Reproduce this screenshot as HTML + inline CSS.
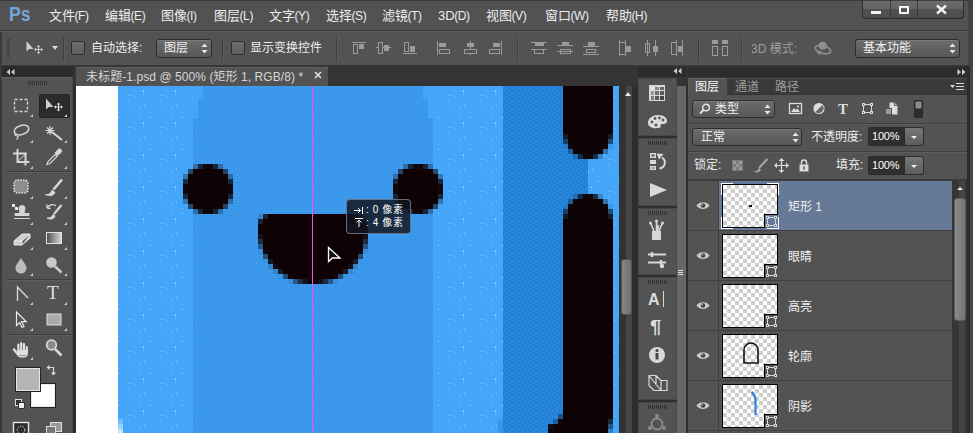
<!DOCTYPE html>
<html lang="zh-CN">
<head>
<meta charset="utf-8">
<title>未标题-1.psd @ 500% (矩形 1, RGB/8) *</title>
<style>
*{box-sizing:border-box;margin:0;padding:0}
html,body{width:973px;height:433px;overflow:hidden;background:#2e2e2e}
body:before{content:"";position:absolute;left:0;top:0;width:973px;height:1px;background:#3c3c3c;z-index:9}
body{position:relative;font-family:"Liberation Sans","Noto Sans CJK SC",sans-serif;font-size:12px;color:#e6e6e6}
.abs{position:absolute}
.t{position:absolute;white-space:nowrap;line-height:16px;font-size:12px}
svg{position:absolute;overflow:visible}
#menubar{left:0;top:0;width:973px;height:31px;background:#525252;border-bottom:1px solid #3b3b3b}
#menubar .mi{position:absolute;top:7px;font-size:13px;line-height:17px;color:#ececec;white-space:nowrap}
#ps{left:9px;top:3px;font-size:20px;line-height:22px;font-weight:bold;color:#77a5d8;transform:scaleX(.88);transform-origin:left top}
#menubar .l{font-size:12px;letter-spacing:-0.4px;margin-left:-0.5px}
#winctl{left:862px;top:0;width:102px;height:19px;background:linear-gradient(#6c6c6c 0,#646464 50%,#525252 50%,#4c4c4c 100%);border:1px solid #2e2e2e;border-top:none;border-radius:0 0 4px 4px}
#optbar{left:0;top:31px;width:973px;height:35px;background:#535353;border-top:1px solid #606060;border-bottom:1px solid #383838}
.vsep{position:absolute;top:37px;width:1px;height:24px;background:#3e3e3e;box-shadow:1px 0 0 #5e5e5e}
.chk{position:absolute;top:41px;width:14px;height:14px;border:1px solid #2f2f2f;border-radius:2px;background:linear-gradient(#6e6e6e,#5e5e5e)}
.dd{position:absolute;border:1px solid #2d2d2d;border-radius:3px;background:linear-gradient(#6b6b6b,#585858);box-shadow:inset 0 1px 0 #7a7a7a}
#tabbar{left:0;top:66px;width:973px;height:20px;background:#343434}
#doctab{left:76px;top:67px;width:252px;height:19px;background:#535353;border-top:1px solid #626262}
#toolhdr{left:2px;top:66px;width:71px;height:11px;background:#2b2b2b}
#toolbox{left:0;top:77px;width:73px;height:356px;background:#535353;border-left:2px solid #3a3a3a;border-right:1px solid #484848;border-top:1px solid #5e5e5e}
.tsep{position:absolute;left:5px;width:64px;height:1px;background:#3e3e3e;box-shadow:0 1px 0 #5e5e5e}
#canvas{left:77px;top:86px;width:542px;height:347px;background:#42a4f8;overflow:hidden}
#vscroll{left:619px;top:86px;width:19px;height:347px;background:linear-gradient(90deg,#333 0,#333 7px,#454545 7px,#454545 13px,#2e2e2e 13px)}
#vthumb{left:621px;top:259px;width:11px;height:56px;background:linear-gradient(90deg,#868686,#707070);border-radius:3px;border:1px solid #555}
#strip{left:638px;top:78px;width:39px;height:355px;background:#2e2e2e}
.sg{position:absolute;left:0;width:39px;background:#535353;border:1px solid #474747}
.grip{position:absolute;height:4px;background:repeating-linear-gradient(90deg,#333 0,#333 1px,transparent 1px,transparent 2px)}
#handle{left:677px;top:86px;width:9px;height:347px;background:#676767}
#panel{left:688px;top:78px;width:279px;height:355px;background:#535353}
#ptabs{left:0;top:0;width:279px;height:17px;background:#3a3a3a;border-bottom:1px solid #333;border-top:1px solid #484848}
#ptab1{left:0;top:0;width:39px;height:18px;background:#535353;border-top:1px solid #646464;border-left:1px solid #5e5e5e}
.psep{position:absolute;left:0;width:279px;height:1px;background:#3f3f3f;box-shadow:0 1px 0 #5c5c5c}
.val{position:absolute;width:37px;height:19px;background:#2f2f2f;border:1px solid #2a2a2a;border-radius:2px 0 0 2px;color:#fff;font-size:11px;line-height:17px;padding-left:3px;letter-spacing:-0.2px}
.vbtn{position:absolute;width:19px;height:19px;background:linear-gradient(#777,#5d5d5d);border:1px solid #2d2d2d;border-left:none;border-radius:0 3px 3px 0}
.vbtn:after{content:"";position:absolute;left:6px;top:8px;border:3px solid transparent;border-top:3px solid #eee;border-bottom:none}
.row{position:absolute;left:0;width:264px;height:50px;border-bottom:1px solid #404040}
.row .eyecol{position:absolute;left:0;top:0;width:31px;height:49px;border-right:1px solid #404040}
.thumb{position:absolute;left:34px;top:3px;width:56px;height:44px;border:1px solid #000;
 background:repeating-conic-gradient(#cdcdcd 0 25%,#fff 0 50%) 0 0/8px 8px}
.row.sel .badge{background:#667996}
.badge{position:absolute;right:-1px;bottom:-1px;width:14px;height:14px;background:#535353;border:1px solid #000;border-right:none;border-bottom:none}
.lname{position:absolute;left:100px;top:18px;font-size:12px;line-height:16px;color:#f0f0f0;white-space:nowrap}
</style>
</head>
<body>
<div id="menubar" class="abs">
  <div id="ps" class="abs">Ps</div>
  <span class="mi" style="left:49px">文件<span class="l">(F)</span></span>
  <span class="mi" style="left:105px">编辑<span class="l">(E)</span></span>
  <span class="mi" style="left:161px">图像<span class="l">(I)</span></span>
  <span class="mi" style="left:214px">图层<span class="l">(L)</span></span>
  <span class="mi" style="left:269px">文字<span class="l">(Y)</span></span>
  <span class="mi" style="left:326px">选择<span class="l">(S)</span></span>
  <span class="mi" style="left:382px">滤镜<span class="l">(T)</span></span>
  <span class="mi" style="left:438px">3D<span class="l">(D)</span></span>
  <span class="mi" style="left:486px">视图<span class="l">(V)</span></span>
  <span class="mi" style="left:545px">窗口<span class="l">(W)</span></span>
  <span class="mi" style="left:606px">帮助<span class="l">(H)</span></span>
</div>
<div id="winctl" class="abs">
  <div class="abs" style="left:27px;top:0;width:1px;height:18px;background:#3a3a3a"></div>
  <div class="abs" style="left:54px;top:0;width:1px;height:18px;background:#3a3a3a"></div>
  <div class="abs" style="left:8px;top:11px;width:10px;height:3px;background:#f2f2f2"></div>
  <div class="abs" style="left:36px;top:6px;width:10px;height:8px;border:2px solid #f2f2f2"></div>
  <svg style="left:73px;top:5px" width="11" height="9" viewBox="0 0 11 9"><path d="M1 0.5 L10 8.5 M10 0.5 L1 8.5" stroke="#f2f2f2" stroke-width="2.4" fill="none"/></svg>
</div>
<div id="optbar" class="abs"></div>
<!-- options bar contents (absolute page coords) -->
<div class="abs" style="left:7px;top:39px;width:3px;height:20px;background:repeating-linear-gradient(#3a3a3a 0,#3a3a3a 1px,transparent 1px,transparent 2px)"></div>
<svg style="left:25px;top:40px" width="20" height="15" viewBox="0 0 20 15"><path d="M1.500 1 L1.500 11.500 L4.200 9 L8.500 9 Z" fill="#cfcfcf"/><path d="M13.500 6.500 v6 M10.500 9.500 h6" stroke="#cfcfcf" stroke-width="1" fill="none"/><path d="M13.500 5 l-1.800 2 h3.600z M13.500 14 l-1.800 -2 h3.600z M9 9.500 l2 -1.800 v3.600z M18 9.500 l-2 -1.800 v3.600z" fill="#cfcfcf"/></svg>
<div class="abs" style="left:52px;top:46px;border:3px solid transparent;border-top:4px solid #ddd;border-bottom:none"></div>
<div class="vsep" style="left:63px"></div>
<div class="chk" style="left:71px"></div>
<span class="t" style="left:91px;top:40px;font-size:12px;color:#eee">自动选择:</span>
<div class="dd" style="left:156px;top:39px;width:56px;height:19px"></div>
<span class="t" style="left:164px;top:40px;font-size:12px;color:#f0f0f0">图层</span>
<svg style="left:201px;top:43px" width="7" height="11" viewBox="0 0 7 11"><path d="M3.5 0.5 L6.5 4 H0.5Z M3.5 10.5 L6.5 7 H0.5Z" fill="#e8e8e8"/></svg>
<div class="vsep" style="left:222px"></div>
<div class="chk" style="left:231px"></div>
<span class="t" style="left:250px;top:40px;font-size:12px;color:#eee">显示变换控件</span>
<div class="vsep" style="left:336px"></div>
<svg style="left:0;top:31px" width="973" height="35" viewBox="0 31 973 35" fill="none" stroke="#9a9a9a" stroke-width="1" shape-rendering="crispEdges">
 <!-- align top/vcenter/bottom -->
 <path d="M352 42.5 h14" /><rect x="353.500" y="44.500" width="4" height="9"/><rect x="359" y="44" width="5" height="5" fill="#9a9a9a" stroke="none"/>
 <path d="M376 47.500 h15"/><rect x="378.500" y="42.500" width="4" height="11" fill="#535353"/><rect x="384" y="45" width="5" height="6" fill="#9a9a9a" stroke="none"/>
 <path d="M403 53.500 h14"/><rect x="404.500" y="42.500" width="4" height="9"/><rect x="410" y="46" width="5" height="6" fill="#9a9a9a" stroke="none"/>
 <!-- align left/hcenter/right -->
 <path d="M437.500 41 v14"/><rect x="439" y="43" width="7" height="4" fill="#9a9a9a" stroke="none"/><rect x="439.500" y="49.500" width="10" height="4"/>
 <path d="M470.500 41 v14"/><rect x="467" y="43" width="7" height="4" fill="#9a9a9a" stroke="none"/><rect x="464.500" y="49.500" width="12" height="4" fill="#535353"/>
 <path d="M501.500 41 v14"/><rect x="493" y="43" width="7" height="4" fill="#9a9a9a" stroke="none"/><rect x="489.500" y="49.500" width="10" height="4"/>
 <!-- distribute vertical -->
 <path d="M531 42.500 h16 M531 49.500 h16"/><rect x="535" y="43" width="9" height="3" fill="#9a9a9a" stroke="none"/><rect x="534.500" y="49.500" width="9" height="4"/>
 <path d="M557 45.500 h16 M557 51.500 h16"/><rect x="562" y="42" width="7" height="4" fill="#9a9a9a" stroke="none"/><rect x="560.500" y="49.500" width="10" height="4" fill="#535353"/><path d="M561 51.500 h9"/>
 <path d="M583 46.500 h16 M583 54.500 h16"/><rect x="588" y="42" width="7" height="4" fill="#9a9a9a" stroke="none"/><rect x="586.500" y="49.500" width="9" height="3"/>
 <!-- distribute horizontal -->
 <path d="M619.500 40 v16 M625.500 40 v16"/><path d="M619.500 42.500 h6 M619.500 54.500 h6"/><rect x="626" y="46" width="5" height="6" fill="#9a9a9a" stroke="none"/>
 <path d="M647.500 40 v16 M655.500 40 v16"/><rect x="645.500" y="43.500" width="4" height="9" fill="#535353"/><path d="M647.500 44 v8"/><rect x="653" y="46" width="5" height="6" fill="#9a9a9a" stroke="none"/>
 <path d="M676.500 40 v16 M682.500 40 v16"/><rect x="671.500" y="42.500" width="5" height="12"/><rect x="678" y="46" width="4" height="6" fill="#9a9a9a" stroke="none"/>
 <!-- last -->
 <rect x="712" y="40" width="6" height="4" fill="#9a9a9a" stroke="none"/><rect x="712.500" y="46.500" width="5" height="9"/>
 <rect x="722" y="40" width="6" height="4" fill="#9a9a9a" stroke="none"/><rect x="722.500" y="46.500" width="5" height="9"/>
</svg>
<div class="vsep" style="left:517px"></div>
<div class="vsep" style="left:698px"></div>
<div class="vsep" style="left:741px"></div>
<span class="t" style="left:751px;top:41px;font-size:12px;color:#9c9c9c">3D 模式:</span>
<svg style="left:813px;top:40px" width="20" height="16" viewBox="0 0 20 16" fill="none" stroke="#8e8e8e" stroke-width="1.600"><ellipse cx="10" cy="9.500" rx="8" ry="3.800" transform="rotate(14 10 9.500)"/><circle cx="9.700" cy="5.800" r="4" fill="#8e8e8e" stroke="none"/><path d="M3.500 11.500 l5.500 -0.500 l-2.500 4.500z" fill="#8e8e8e" stroke="none"/></svg>
<div class="dd" style="left:855px;top:39px;width:105px;height:19px"></div>
<span class="t" style="left:863px;top:40px;font-size:12px;color:#f4f4f4">基本功能</span>
<svg style="left:949px;top:43px" width="7" height="11" viewBox="0 0 7 11"><path d="M3.5 0.5 L6.5 4 H0.5Z M3.5 10.5 L6.5 7 H0.5Z" fill="#e8e8e8"/></svg>
<div class="abs" style="left:968px;top:0;width:5px;height:66px;background:#424242"></div>
<div id="tabbar" class="abs"></div>
<div id="doctab" class="abs"></div>
<span class="t" style="left:86px;top:69px;font-size:12px;color:#d6d6d6;letter-spacing:0.07px">未标题-1.psd @ 500% (矩形 1, RGB/8) *</span>
<svg style="left:314px;top:71px" width="8" height="8" viewBox="0 0 8 8"><path d="M1 1 L7 7 M7 1 L1 7" stroke="#e0e0e0" stroke-width="1.6" fill="none"/></svg>
<div id="toolhdr" class="abs"></div>
<div class="abs" style="left:0;top:32px;width:2px;height:401px;background:#3b3b3b"></div>
<div class="abs" style="left:76px;top:86px;width:1px;height:347px;background:#fff"></div>
<svg style="left:6px;top:69px" width="9" height="6" viewBox="0 0 9 6"><path d="M4 0 V6 L0.5 3Z M8.500 0 V6 L5 3Z" fill="#d0d0d0"/></svg>

<div id="toolbox" class="abs">
 <div class="grip" style="left:26px;top:3px;width:20px"></div>
 <div class="abs" style="left:37px;top:16px;width:31px;height:24px;background:#2b2b2b;border-radius:2px;border:1px solid #232323"></div>
 <div class="tsep" style="top:93px"></div>
 <div class="tsep" style="top:201px"></div>
 <div class="tsep" style="top:256px"></div>
 <svg style="left:-2px;top:-78px" width="77" height="433" viewBox="0 0 77 433" fill="none" stroke="#d6d6d6" stroke-width="1.3">
  <!-- marquee -->
  <rect x="14.500" y="99.500" width="13" height="12" stroke-dasharray="3 2" stroke-width="1.4"/>
  <!-- move tool -->
  <path d="M46 98.500 L46 109.500 L48.800 107 L53.500 107 Z" fill="#cfcfcf" stroke="none"/>
  <path d="M58.500 104 v6 M55.500 107 h6" stroke-width="1" stroke="#e0e0e0"/><path d="M58.500 102.500 l-1.800 2 h3.600z M58.500 111.500 l-1.800 -2 h3.600z M54 107 l2 -1.800 v3.600z M63 107 l-2 -1.800 v3.600z" fill="#e0e0e0" stroke="none"/>
  <!-- lasso -->
  <ellipse cx="21.500" cy="130" rx="7.500" ry="4.500" transform="rotate(-18 21.500 130)" stroke-width="1.5"/><path d="M16 133 c-2 1 -1 3 1 3 c2 0 1 2 -0.500 3.500" stroke-width="1.200"/>
  <!-- wand -->
  <path d="M52 132 L62 140" stroke-width="2.200"/><path d="M50 126 v9 M45.500 130.500 h9 M47 127.500 l6 6 M53 127.500 l-6 6" stroke-width="1.200"/>
  <!-- crop -->
  <path d="M17.500 149 v13 h12 M13 153.500 h12.500 v12" stroke-width="2"/><path d="M17 162 l10 -9" stroke-width="1"/>
  <!-- eyedropper -->
  <path d="M47 164.500 l1 -3 l7 -7 l2 2 l-7 7 z" stroke-width="1.200"/><path d="M55 153 l3 -3.500 a2 2 0 0 1 3 3 l-3.500 3 z" fill="#d6d6d6" stroke-width="1"/>
  <!-- healing -->
  <rect x="14" y="180" width="14" height="13" rx="3.500" fill="#8e8e8e" stroke="#e4e4e4" stroke-width="1.600" stroke-dasharray="1.500 1.300"/>
  <!-- brush -->
  <path d="M62 179.500 L53.500 189.500" stroke-width="2.600"/><path d="M45.500 194.500 c3.500 0.500 5.500 -1.500 6.500 -4.500 l3 2.500 c-1.500 3.500 -5 4 -9.500 2z" fill="#d6d6d6" stroke-width="1"/>
  <!-- stamp -->
  <path d="M14 218.500 h16 M15 215.500 h14 v-2 h-4.500 c-1 -2 0.500 -3 0.500 -5 a3 3 0 0 0 -6 0 c0 2 1.500 3 0.500 5 h-4.500z" fill="#d6d6d6" stroke-width="1"/><path d="M12 204 h3 v3 h-3z M15 207 h3 v3 h-3z" fill="#e8e8e8" stroke="none"/>
  <!-- history brush -->
  <path d="M61.500 205 L54 214" stroke-width="2.200"/><path d="M47 218 c3 0.500 5 -1 6 -3.500 l2 1.500 c-1 3 -4 4 -8 2z" fill="#d6d6d6" stroke-width="1"/><path d="M47 208 c2 -4 7 -4 9 -2 M47 208 l0 -3.500 M47 208 l3.500 0.500" stroke-width="1.300"/>
  <!-- eraser -->
  <path d="M14 241 l8 -7 h8 l-8 7 z M14 241 v4 h8 v-4 M22 245 l8 -7 v-4" fill="#cfcfcf" stroke="#e6e6e6" stroke-width="1"/>
  <!-- gradient -->
  <defs><linearGradient id="gr" x1="0" x2="1"><stop offset="0" stop-color="#4a4a4a"/><stop offset="1" stop-color="#dcdcdc"/></linearGradient></defs>
  <rect x="46.500" y="232.500" width="15" height="11" fill="url(#gr)" stroke="#e2e2e2" stroke-width="1"/>
  <!-- blur drop -->
  <path d="M21 258 c3 5 5.500 7 5.500 10 a5.500 5.500 0 0 1 -11 0 c0 -3 2.500 -5 5.500 -10z" fill="#bdbdbd" stroke="none"/>
  <!-- dodge -->
  <circle cx="51.500" cy="262.500" r="5.300" fill="#c9c9c9" stroke="none"/><path d="M55 266.500 L61.500 272.500" stroke-width="2.600" stroke="#c9c9c9"/>
  <!-- pen/convert -->
  <path d="M17.500 301 V287 L28 298" stroke-width="1.400"/>
  <!-- T -->
  <!-- path select -->
  <path d="M16.500 312 v13.500 l3.200 -3 l2.300 5 l2 -1 l-2.300 -4.800 h4.500 z" stroke-width="1.200" stroke="#ececec"/>
  <!-- rectangle -->
  <rect x="47" y="314" width="14" height="11" fill="#a9a9a9" stroke="#dedede" stroke-width="1"/>
  <!-- hand -->
  <g stroke="#dedede" stroke-linecap="round" fill="none"><path d="M18.400 351 V344.500 M21.200 351 V343 M24 351 V344 M26.800 352 V347" stroke-width="2.200"/><path d="M14 349.500 L18 354.500" stroke-width="2.500"/></g>
  <path d="M17.300 350 H27.900 V353 C27.900 356 26 357.500 24 357.500 H20.500 C18.500 357.500 17.300 355.500 17.300 353.500Z" fill="#dedede" stroke="none"/>
  <path d="M19 355.500 h7" stroke="#9a9a9a" stroke-width="1"/>
  <!-- zoom -->
  <circle cx="51.500" cy="345" r="4.800" stroke-width="1.800" fill="#8a8a8a"/><path d="M55 349 L61.500 355.500" stroke-width="2.600"/>
  <!-- swap -->
  <path d="M49 367.500 h4.500 v6" stroke-width="1.200"/><path d="M49.500 365 v5 l-3 -2.500z M51 372.500 h5 l-2.500 3z" fill="#e0e0e0" stroke="none"/>
  <!-- default colors -->
  <rect x="15.500" y="399.500" width="6" height="6" fill="#333" stroke="#ddd" stroke-width="1"/><rect x="18.500" y="402.500" width="6" height="6" fill="#eee" stroke="#333" stroke-width="1"/>
  <!-- quick mask -->
  <rect x="13.500" y="422.500" width="15" height="12" stroke="#e6e6e6" stroke-width="1.400" fill="#2d2d2d"/><circle cx="21" cy="430" r="3.800" stroke-dasharray="1.500 1.200" stroke-width="1"/>
  <!-- screen mode -->
  <rect x="50.500" y="422.500" width="11" height="9" fill="#9a9a9a" stroke="#dedede" stroke-width="1"/><rect x="46.500" y="426.500" width="9" height="8" fill="#777" stroke="#dedede" stroke-width="1"/>
  <!-- flyout triangles -->
  <g fill="#c8c8c8" stroke="none">
   <path d="M33 114 v3 h-3z M67 114 v3 h-3z M33 140 v3 h-3z M67 140 v3 h-3z M33 166 v3 h-3z M67 166 v3 h-3z"/>
   <path d="M33 196 v3 h-3z M67 196 v3 h-3z M33 222 v3 h-3z M67 222 v3 h-3z M33 247 v3 h-3z M67 247 v3 h-3z M33 273 v3 h-3z M67 273 v3 h-3z"/>
   <path d="M33 302 v3 h-3z M67 302 v3 h-3z M33 328 v3 h-3z M67 328 v3 h-3z M33 357 v3 h-3z"/>
  </g>
 </svg>
 <span class="t" style="left:45px;top:204px;font-family:'Liberation Serif',serif;font-size:19px;line-height:22px;color:#e2e2e2">T</span>
 <div class="abs" style="left:28px;top:305px;width:26px;height:25px;background:#fff;border:1px solid #222;box-shadow:0 0 0 1px #e8e8e8 inset"></div>
 <div class="abs" style="left:13px;top:289px;width:26px;height:25px;background:#b5b5b5;border:1px solid #222;box-shadow:0 0 0 1px #e8e8e8 inset"></div>
</div>

<div id="canvas" class="abs">
<svg class="abs" style="left:0;top:0" width="542" height="347" viewBox="0 0 542 347" shape-rendering="crispEdges">
<defs><pattern id="pm" width="4" height="6" patternUnits="userSpaceOnUse"><rect x="0" y="0" width="1" height="1" fill="#2c78d2" opacity=".55"/><rect x="2" y="3" width="1" height="1" fill="#2c78d2" opacity=".55"/></pattern><pattern id="pd" width="12" height="8" patternUnits="userSpaceOnUse"><rect x="0" y="7" width="1" height="1" fill="#12629f" opacity=".8"/><rect x="3" y="5" width="1" height="1" fill="#12629f" opacity=".8"/><rect x="6" y="3" width="1" height="1" fill="#12629f" opacity=".8"/><rect x="9" y="1" width="1" height="1" fill="#12629f" opacity=".8"/><rect x="1" y="3" width="1" height="1" fill="#12629f" opacity=".8"/><rect x="4" y="1" width="1" height="1" fill="#12629f" opacity=".8"/><rect x="7" y="7" width="1" height="1" fill="#12629f" opacity=".8"/><rect x="10" y="5" width="1" height="1" fill="#12629f" opacity=".8"/></pattern><pattern id="pl" width="32" height="32" patternUnits="userSpaceOnUse"><rect x="20" y="9" width="1" height="1" fill="#d8f0ff" opacity=".6"/><rect x="3" y="4" width="1" height="1" fill="#8aa2b4" opacity=".6"/><rect x="23" y="3" width="1" height="1" fill="#8aa2b4" opacity=".6"/><rect x="2" y="5" width="1" height="1" fill="#d8f0ff" opacity=".6"/><rect x="26" y="4" width="1" height="1" fill="#8aa2b4" opacity=".6"/><rect x="5" y="27" width="1" height="1" fill="#8aa2b4" opacity=".6"/><rect x="7" y="14" width="1" height="1" fill="#8aa2b4" opacity=".6"/><rect x="25" y="3" width="1" height="1" fill="#8aa2b4" opacity=".6"/><rect x="2" y="8" width="1" height="1" fill="#a8dcff" opacity=".6"/><rect x="26" y="9" width="1" height="1" fill="#8aa2b4" opacity=".6"/><rect x="19" y="11" width="1" height="1" fill="#8aa2b4" opacity=".6"/><rect x="12" y="23" width="1" height="1" fill="#8aa2b4" opacity=".6"/><rect x="4" y="3" width="1" height="1" fill="#8aa2b4" opacity=".6"/><rect x="31" y="27" width="1" height="1" fill="#a8dcff" opacity=".6"/><rect x="29" y="29" width="1" height="1" fill="#a8dcff" opacity=".6"/><rect x="19" y="15" width="1" height="1" fill="#8aa2b4" opacity=".6"/><rect x="15" y="5" width="1" height="1" fill="#a8dcff" opacity=".6"/><rect x="31" y="21" width="1" height="1" fill="#d8f0ff" opacity=".6"/><rect x="18" y="4" width="1" height="1" fill="#8aa2b4" opacity=".6"/><rect x="26" y="10" width="1" height="1" fill="#a8dcff" opacity=".6"/><rect x="9" y="31" width="1" height="1" fill="#d8f0ff" opacity=".6"/><rect x="2" y="4" width="1" height="1" fill="#a8dcff" opacity=".6"/><rect x="21" y="22" width="1" height="1" fill="#d8f0ff" opacity=".6"/><rect x="29" y="4" width="1" height="1" fill="#8aa2b4" opacity=".6"/><rect x="17" y="30" width="1" height="1" fill="#8aa2b4" opacity=".6"/><rect x="3" y="19" width="1" height="1" fill="#d8f0ff" opacity=".6"/></pattern></defs>
<rect x="0" y="0" width="41" height="347" fill="#ffffff"/>
<rect x="41" y="0" width="501" height="347" fill="#43a6fa"/>
<rect x="116" y="33" width="240" height="314" fill="#3c9aec"/>
<rect x="121" y="13" width="230" height="20" fill="#3c9aec"/>
<rect x="126" y="0" width="220" height="13" fill="#3c9aec"/>
<rect x="426" y="0" width="85" height="347" fill="#2686dd"/>
<rect x="421" y="333" width="5" height="14" fill="#3698ed"/>
<rect x="41" y="333" width="5" height="5" fill="#72bcfb"/>
<rect x="41" y="338" width="5" height="5" fill="#98cefc"/>
<rect x="41" y="343" width="5" height="4" fill="#c7e4fe"/>
<rect x="41" y="0" width="75" height="347" fill="url(#pl)"/>
<rect x="356" y="0" width="70" height="347" fill="url(#pl)"/>
<rect x="511" y="0" width="31" height="347" fill="url(#pl)"/>
<rect x="116" y="33" width="240" height="314" fill="url(#pm)"/>
<rect x="121" y="13" width="230" height="20" fill="url(#pm)"/>
<rect x="126" y="5" width="220" height="8" fill="url(#pm)"/>
<rect x="426" y="0" width="85" height="347" fill="url(#pd)"/>
<rect x="116" y="78" width="5" height="5" fill="#2e6da7"/>
<rect x="121" y="78" width="5" height="5" fill="#19263a"/>
<rect x="126" y="78" width="10" height="5" fill="#0f070b"/>
<rect x="136" y="78" width="5" height="5" fill="#19263a"/>
<rect x="141" y="78" width="5" height="5" fill="#2e6da7"/>
<rect x="111" y="83" width="5" height="5" fill="#254a70"/>
<rect x="116" y="83" width="30" height="5" fill="#0e0204"/>
<rect x="146" y="83" width="5" height="5" fill="#22446a"/>
<rect x="106" y="88" width="5" height="5" fill="#3375b1"/>
<rect x="111" y="88" width="40" height="5" fill="#0e0204"/>
<rect x="151" y="88" width="5" height="5" fill="#2e6da7"/>
<rect x="106" y="93" width="5" height="5" fill="#1a283e"/>
<rect x="111" y="93" width="40" height="5" fill="#0e0204"/>
<rect x="151" y="93" width="5" height="5" fill="#19263a"/>
<rect x="106" y="98" width="5" height="5" fill="#10070c"/>
<rect x="111" y="98" width="40" height="5" fill="#0e0204"/>
<rect x="151" y="98" width="5" height="5" fill="#0f070b"/>
<rect x="106" y="103" width="5" height="5" fill="#10070c"/>
<rect x="111" y="103" width="40" height="5" fill="#0e0204"/>
<rect x="151" y="103" width="5" height="5" fill="#0f070b"/>
<rect x="106" y="108" width="5" height="5" fill="#1a283e"/>
<rect x="111" y="108" width="40" height="5" fill="#0e0204"/>
<rect x="151" y="108" width="5" height="5" fill="#19263a"/>
<rect x="106" y="113" width="5" height="5" fill="#3375b1"/>
<rect x="111" y="113" width="40" height="5" fill="#0e0204"/>
<rect x="151" y="113" width="5" height="5" fill="#2e6da7"/>
<rect x="111" y="118" width="5" height="5" fill="#254a70"/>
<rect x="116" y="118" width="30" height="5" fill="#0e0204"/>
<rect x="146" y="118" width="5" height="5" fill="#22446a"/>
<rect x="116" y="123" width="5" height="5" fill="#2e6da7"/>
<rect x="121" y="123" width="5" height="5" fill="#19263a"/>
<rect x="126" y="123" width="10" height="5" fill="#0f070b"/>
<rect x="136" y="123" width="5" height="5" fill="#19263a"/>
<rect x="141" y="123" width="5" height="5" fill="#2e6da7"/>
<rect x="326" y="78" width="5" height="5" fill="#2e6da7"/>
<rect x="331" y="78" width="5" height="5" fill="#19263a"/>
<rect x="336" y="78" width="10" height="5" fill="#0f070b"/>
<rect x="346" y="78" width="5" height="5" fill="#19263a"/>
<rect x="351" y="78" width="5" height="5" fill="#2e6da7"/>
<rect x="321" y="83" width="5" height="5" fill="#22446a"/>
<rect x="326" y="83" width="30" height="5" fill="#0e0204"/>
<rect x="356" y="83" width="5" height="5" fill="#254a70"/>
<rect x="316" y="88" width="5" height="5" fill="#2e6da7"/>
<rect x="321" y="88" width="40" height="5" fill="#0e0204"/>
<rect x="361" y="88" width="5" height="5" fill="#3375b1"/>
<rect x="316" y="93" width="5" height="5" fill="#19263a"/>
<rect x="321" y="93" width="40" height="5" fill="#0e0204"/>
<rect x="361" y="93" width="5" height="5" fill="#1a283e"/>
<rect x="316" y="98" width="5" height="5" fill="#0f070b"/>
<rect x="321" y="98" width="40" height="5" fill="#0e0204"/>
<rect x="361" y="98" width="5" height="5" fill="#10070c"/>
<rect x="316" y="103" width="5" height="5" fill="#0f070b"/>
<rect x="321" y="103" width="40" height="5" fill="#0e0204"/>
<rect x="361" y="103" width="5" height="5" fill="#10070c"/>
<rect x="316" y="108" width="5" height="5" fill="#19263a"/>
<rect x="321" y="108" width="40" height="5" fill="#0e0204"/>
<rect x="361" y="108" width="5" height="5" fill="#1a283e"/>
<rect x="316" y="113" width="5" height="5" fill="#2e6da7"/>
<rect x="321" y="113" width="40" height="5" fill="#0e0204"/>
<rect x="361" y="113" width="5" height="5" fill="#3375b1"/>
<rect x="321" y="118" width="5" height="5" fill="#22446a"/>
<rect x="326" y="118" width="30" height="5" fill="#0e0204"/>
<rect x="356" y="118" width="5" height="5" fill="#254a70"/>
<rect x="326" y="123" width="5" height="5" fill="#2e6da7"/>
<rect x="331" y="123" width="5" height="5" fill="#19263a"/>
<rect x="336" y="123" width="10" height="5" fill="#0f070b"/>
<rect x="346" y="123" width="5" height="5" fill="#19263a"/>
<rect x="351" y="123" width="5" height="5" fill="#2e6da7"/>
<rect x="181" y="128" width="5" height="5" fill="#3582c8"/>
<rect x="186" y="128" width="5" height="5" fill="#19263a"/>
<rect x="191" y="128" width="90" height="5" fill="#0e0204"/>
<rect x="281" y="128" width="5" height="5" fill="#19263a"/>
<rect x="286" y="128" width="5" height="5" fill="#3582c8"/>
<rect x="181" y="133" width="5" height="5" fill="#19263a"/>
<rect x="186" y="133" width="100" height="5" fill="#0e0204"/>
<rect x="286" y="133" width="5" height="5" fill="#19263a"/>
<rect x="181" y="138" width="110" height="5" fill="#0e0204"/>
<rect x="181" y="143" width="110" height="5" fill="#0e0204"/>
<rect x="181" y="148" width="5" height="5" fill="#13131d"/>
<rect x="186" y="148" width="100" height="5" fill="#0e0204"/>
<rect x="286" y="148" width="5" height="5" fill="#13131d"/>
<rect x="181" y="153" width="5" height="5" fill="#1c2f49"/>
<rect x="186" y="153" width="100" height="5" fill="#0e0204"/>
<rect x="286" y="153" width="5" height="5" fill="#1c2f49"/>
<rect x="181" y="158" width="5" height="5" fill="#285886"/>
<rect x="186" y="158" width="100" height="5" fill="#0e0204"/>
<rect x="286" y="158" width="5" height="5" fill="#285886"/>
<rect x="181" y="163" width="5" height="5" fill="#388eda"/>
<rect x="186" y="163" width="5" height="5" fill="#0f070b"/>
<rect x="191" y="163" width="90" height="5" fill="#0e0204"/>
<rect x="281" y="163" width="5" height="5" fill="#0f070b"/>
<rect x="286" y="163" width="5" height="5" fill="#388eda"/>
<rect x="186" y="168" width="5" height="5" fill="#244c74"/>
<rect x="191" y="168" width="90" height="5" fill="#0e0204"/>
<rect x="281" y="168" width="5" height="5" fill="#244c74"/>
<rect x="186" y="173" width="5" height="5" fill="#3b95e5"/>
<rect x="191" y="173" width="5" height="5" fill="#161c2c"/>
<rect x="196" y="173" width="80" height="5" fill="#0e0204"/>
<rect x="276" y="173" width="5" height="5" fill="#161c2c"/>
<rect x="281" y="173" width="5" height="5" fill="#3b95e5"/>
<rect x="191" y="178" width="5" height="5" fill="#3685cb"/>
<rect x="196" y="178" width="5" height="5" fill="#12101a"/>
<rect x="201" y="178" width="70" height="5" fill="#0e0204"/>
<rect x="271" y="178" width="5" height="5" fill="#12101a"/>
<rect x="276" y="178" width="5" height="5" fill="#3685cb"/>
<rect x="196" y="183" width="5" height="5" fill="#3685cb"/>
<rect x="201" y="183" width="5" height="5" fill="#161c2c"/>
<rect x="206" y="183" width="60" height="5" fill="#0e0204"/>
<rect x="266" y="183" width="5" height="5" fill="#161c2c"/>
<rect x="271" y="183" width="5" height="5" fill="#3685cb"/>
<rect x="201" y="188" width="5" height="5" fill="#3b95e5"/>
<rect x="206" y="188" width="5" height="5" fill="#244c74"/>
<rect x="211" y="188" width="5" height="5" fill="#0f070b"/>
<rect x="216" y="188" width="40" height="5" fill="#0e0204"/>
<rect x="256" y="188" width="5" height="5" fill="#0f070b"/>
<rect x="261" y="188" width="5" height="5" fill="#244c74"/>
<rect x="266" y="188" width="5" height="5" fill="#3b95e5"/>
<rect x="211" y="193" width="5" height="5" fill="#388eda"/>
<rect x="216" y="193" width="5" height="5" fill="#285886"/>
<rect x="221" y="193" width="5" height="5" fill="#1c2f49"/>
<rect x="226" y="193" width="5" height="5" fill="#13131d"/>
<rect x="231" y="193" width="10" height="5" fill="#0e0204"/>
<rect x="241" y="193" width="5" height="5" fill="#13131d"/>
<rect x="246" y="193" width="5" height="5" fill="#1c2f49"/>
<rect x="251" y="193" width="5" height="5" fill="#285886"/>
<rect x="256" y="193" width="5" height="5" fill="#388eda"/>
<rect x="486" y="-2" width="50" height="5" fill="#0e0204"/>
<rect x="486" y="3" width="50" height="5" fill="#0e0204"/>
<rect x="486" y="8" width="50" height="5" fill="#0e0204"/>
<rect x="486" y="13" width="50" height="5" fill="#0e0204"/>
<rect x="486" y="18" width="50" height="5" fill="#0e0204"/>
<rect x="486" y="23" width="50" height="5" fill="#0e0204"/>
<rect x="486" y="28" width="50" height="5" fill="#0e0204"/>
<rect x="486" y="33" width="50" height="5" fill="#0e0204"/>
<rect x="486" y="38" width="50" height="5" fill="#0e0204"/>
<rect x="486" y="43" width="50" height="5" fill="#0e0204"/>
<rect x="486" y="48" width="5" height="5" fill="#121929"/>
<rect x="491" y="48" width="40" height="5" fill="#0e0204"/>
<rect x="531" y="48" width="5" height="5" fill="#171e2e"/>
<rect x="486" y="53" width="5" height="5" fill="#193e66"/>
<rect x="491" y="53" width="40" height="5" fill="#0e0204"/>
<rect x="531" y="53" width="5" height="5" fill="#264c73"/>
<rect x="486" y="58" width="5" height="5" fill="#247ac9"/>
<rect x="491" y="58" width="5" height="5" fill="#0f080e"/>
<rect x="496" y="58" width="30" height="5" fill="#0e0204"/>
<rect x="526" y="58" width="5" height="5" fill="#100a10"/>
<rect x="531" y="58" width="5" height="5" fill="#3e97e3"/>
<rect x="491" y="63" width="5" height="5" fill="#1e5d99"/>
<rect x="496" y="63" width="5" height="5" fill="#0e0407"/>
<rect x="501" y="63" width="20" height="5" fill="#0e0204"/>
<rect x="521" y="63" width="5" height="5" fill="#0f0508"/>
<rect x="526" y="63" width="5" height="5" fill="#3273ad"/>
<rect x="496" y="68" width="5" height="5" fill="#216bb1"/>
<rect x="501" y="68" width="5" height="5" fill="#152741"/>
<rect x="506" y="68" width="5" height="5" fill="#0f060b"/>
<rect x="511" y="68" width="5" height="5" fill="#10070c"/>
<rect x="516" y="68" width="5" height="5" fill="#1d3049"/>
<rect x="521" y="68" width="5" height="5" fill="#3885c8"/>
<rect x="496" y="108" width="5" height="5" fill="#216bb1"/>
<rect x="501" y="108" width="5" height="5" fill="#152741"/>
<rect x="506" y="108" width="5" height="5" fill="#0f060b"/>
<rect x="511" y="108" width="5" height="5" fill="#10070c"/>
<rect x="516" y="108" width="5" height="5" fill="#1d3049"/>
<rect x="521" y="108" width="5" height="5" fill="#3885c8"/>
<rect x="491" y="113" width="5" height="5" fill="#1e5d99"/>
<rect x="496" y="113" width="5" height="5" fill="#0e0407"/>
<rect x="501" y="113" width="20" height="5" fill="#0e0204"/>
<rect x="521" y="113" width="5" height="5" fill="#0f0508"/>
<rect x="526" y="113" width="5" height="5" fill="#3273ad"/>
<rect x="486" y="118" width="5" height="5" fill="#247ac9"/>
<rect x="491" y="118" width="5" height="5" fill="#0f080e"/>
<rect x="496" y="118" width="30" height="5" fill="#0e0204"/>
<rect x="526" y="118" width="5" height="5" fill="#100a10"/>
<rect x="531" y="118" width="5" height="5" fill="#3e97e3"/>
<rect x="486" y="123" width="5" height="5" fill="#193e66"/>
<rect x="491" y="123" width="40" height="5" fill="#0e0204"/>
<rect x="531" y="123" width="5" height="5" fill="#264c73"/>
<rect x="486" y="128" width="5" height="5" fill="#121929"/>
<rect x="491" y="128" width="40" height="5" fill="#0e0204"/>
<rect x="531" y="128" width="5" height="5" fill="#171e2e"/>
<rect x="486" y="133" width="50" height="5" fill="#0e0204"/>
<rect x="486" y="138" width="50" height="5" fill="#0e0204"/>
<rect x="486" y="143" width="50" height="5" fill="#0e0204"/>
<rect x="486" y="148" width="50" height="5" fill="#0e0204"/>
<rect x="486" y="153" width="50" height="5" fill="#0e0204"/>
<rect x="486" y="158" width="50" height="5" fill="#0e0204"/>
<rect x="486" y="163" width="50" height="5" fill="#0e0204"/>
<rect x="486" y="168" width="50" height="5" fill="#0e0204"/>
<rect x="486" y="173" width="50" height="5" fill="#0e0204"/>
<rect x="486" y="178" width="50" height="5" fill="#0e0204"/>
<rect x="486" y="183" width="50" height="5" fill="#0e0204"/>
<rect x="486" y="188" width="50" height="5" fill="#0e0204"/>
<rect x="486" y="193" width="50" height="5" fill="#0e0204"/>
<rect x="486" y="198" width="50" height="5" fill="#0e0204"/>
<rect x="486" y="203" width="50" height="5" fill="#0e0204"/>
<rect x="486" y="208" width="50" height="5" fill="#0e0204"/>
<rect x="486" y="213" width="50" height="5" fill="#0e0204"/>
<rect x="486" y="218" width="50" height="5" fill="#0e0204"/>
<rect x="486" y="223" width="50" height="5" fill="#0e0204"/>
<rect x="486" y="228" width="50" height="5" fill="#0e0204"/>
<rect x="486" y="233" width="50" height="5" fill="#0e0204"/>
<rect x="486" y="238" width="50" height="5" fill="#0e0204"/>
<rect x="486" y="243" width="50" height="5" fill="#0e0204"/>
<rect x="486" y="248" width="50" height="5" fill="#0e0204"/>
<rect x="486" y="253" width="50" height="5" fill="#0e0204"/>
<rect x="486" y="258" width="50" height="5" fill="#0e0204"/>
<rect x="486" y="263" width="50" height="5" fill="#0e0204"/>
<rect x="486" y="268" width="50" height="5" fill="#0e0204"/>
<rect x="486" y="273" width="50" height="5" fill="#0e0204"/>
<rect x="486" y="278" width="50" height="5" fill="#0e0204"/>
<rect x="486" y="283" width="50" height="5" fill="#0e0204"/>
<rect x="486" y="288" width="50" height="5" fill="#0e0204"/>
<rect x="486" y="293" width="50" height="5" fill="#0e0204"/>
<rect x="486" y="298" width="50" height="5" fill="#0e0204"/>
<rect x="486" y="303" width="50" height="5" fill="#0e0204"/>
<rect x="486" y="308" width="50" height="5" fill="#0e0204"/>
<rect x="486" y="313" width="50" height="5" fill="#0e0204"/>
<rect x="486" y="318" width="50" height="5" fill="#0e0204"/>
<rect x="481" y="323" width="5" height="5" fill="#2580d3"/>
<rect x="486" y="323" width="50" height="5" fill="#0e0204"/>
<rect x="481" y="328" width="5" height="5" fill="#1d5288"/>
<rect x="486" y="328" width="45" height="5" fill="#0e0204"/>
<rect x="531" y="328" width="5" height="5" fill="#10070c"/>
<rect x="476" y="333" width="5" height="5" fill="#1f5f9d"/>
<rect x="481" y="333" width="5" height="5" fill="#0f080e"/>
<rect x="486" y="333" width="45" height="5" fill="#0e0204"/>
<rect x="531" y="333" width="5" height="5" fill="#1b2b42"/>
<rect x="471" y="338" width="5" height="5" fill="#11101c"/>
<rect x="476" y="338" width="55" height="5" fill="#0e0204"/>
<rect x="531" y="338" width="5" height="5" fill="#28547f"/>
<rect x="471" y="343" width="60" height="5" fill="#0e0204"/>
<rect x="531" y="343" width="5" height="5" fill="#367dbc"/>
</svg>
<div class="abs" style="left:235px;top:0;width:1px;height:347px;background:#fa4cfa"></div>
<div class="abs" style="left:269px;top:113px;width:65px;height:35px;background:rgba(18,22,32,0.84);border:1px solid rgba(125,140,160,0.75);border-radius:4px"></div>
<svg style="left:277px;top:120px" width="10" height="22" viewBox="0 0 10 22" fill="none" stroke="#fff" stroke-width="1"><path d="M0 4.500 h6 M4 2 l2.500 2.500 l-2.500 2.500 M8.500 1 v7"/><path d="M1 12.500 h8 M5 21 v-7 M2.500 16.500 l2.500 -2.500 l2.500 2.500"/></svg>
<span class="t" style="left:289px;top:117px;font-size:10px;line-height:13px;color:#fff;letter-spacing:0.6px">: 0 像素</span>
<span class="t" style="left:289px;top:130px;font-size:10px;line-height:13px;color:#fff;letter-spacing:0.6px">: 4 像素</span>
<svg style="left:250px;top:160px" width="16" height="18" viewBox="0 0 16 18"><path d="M1.500 1.500 L1.500 15.500 L5.500 12 L13 12 Z" fill="#161616" stroke="#fff" stroke-width="1.300" stroke-linejoin="miter"/></svg>

</div>
<div id="vscroll" class="abs"></div>
<div class="abs" style="left:625px;top:92px;border:3px solid transparent;border-bottom:4px solid #e8e8e8;border-top:none"></div>
<div id="vthumb" class="abs"></div>
<!-- collapse header above strip -->
<div class="abs" style="left:638px;top:67px;width:49px;height:10px;background:#2b2b2b"></div>
<svg style="left:673px;top:68px" width="9" height="6" viewBox="0 0 9 6"><path d="M4 0 V6 L0.5 3Z M8.500 0 V6 L5 3Z" fill="#d0d0d0"/></svg>
<div id="strip" class="abs">
 <div class="sg" style="top:0;height:58px"></div>
 <div class="sg" style="top:60px;height:68px"><div class="grip" style="left:9px;top:2px;width:20px"></div></div>
 <div class="sg" style="top:130px;height:67px"><div class="grip" style="left:9px;top:2px;width:20px"></div></div>
 <div class="sg" style="top:199px;height:123px"><div class="grip" style="left:9px;top:2px;width:20px"></div></div>
 <div class="sg" style="top:324px;height:40px"><div class="grip" style="left:9px;top:2px;width:20px"></div></div>
 <svg style="left:0;top:0" width="39" height="355" viewBox="638 78 39 355" fill="none" stroke="#d8d8d8" stroke-width="1.3">
  <!-- swatches grid -->
  <rect x="649.500" y="85.500" width="15" height="15" fill="#d8d8d8" stroke="#d8d8d8" stroke-width="1"/>
  <g stroke="none"><rect x="651" y="87" width="3" height="3" fill="#e8e8e8"/><rect x="655" y="87" width="4" height="3" fill="#8a8a8a"/><rect x="660" y="87" width="4" height="3" fill="#666"/>
  <rect x="651" y="91" width="3" height="4" fill="#9a9a9a"/><rect x="655" y="91" width="4" height="4" fill="#707070"/><rect x="660" y="91" width="4" height="4" fill="#555"/>
  <rect x="651" y="96" width="3" height="4" fill="#7a7a7a"/><rect x="655" y="96" width="4" height="4" fill="#5a5a5a"/><rect x="660" y="96" width="4" height="4" fill="#444"/></g>
  <!-- palette -->
  <path d="M648 123 c0 -5 5 -8 10 -8 c6 0 9 3 9 6 c0 3 -3 3 -5 3 c-2 0 -2 2 -1 3 c-2 2 -13 2 -13 -4z" fill="#dcdcdc" stroke="none"/>
  <g fill="#555" stroke="none"><circle cx="652" cy="122" r="1.400"/><circle cx="655" cy="118.500" r="1.400"/><circle cx="659.500" cy="118" r="1.400"/><circle cx="663" cy="120" r="1.400"/><circle cx="656" cy="125" r="1.600"/></g>
  <!-- history -->
  <g stroke="none" fill="#d8d8d8"><rect x="650" y="153" width="6" height="5"/><rect x="650" y="160" width="6" height="4"/><rect x="650" y="166" width="6" height="4"/></g>
  <rect x="651.500" y="154.500" width="3" height="2" fill="#535353" stroke="none"/><rect x="651.500" y="167.500" width="3" height="1" fill="#535353" stroke="none"/>
  <path d="M659.500 168.500 c5.500 -1 7.500 -7.500 2.500 -11" stroke-width="2"/><path d="M656.500 153.500 l7 0.500 l-4.500 5.500z" fill="#d8d8d8" stroke="none"/>
  <!-- actions play -->
  <path d="M650 183 L667 190 L650 197Z" fill="#d8d8d8" stroke="none"/>
  <!-- brushes in cup -->
  <path d="M652 231 h9 v9 h-9z" fill="#d8d8d8" stroke="none"/><path d="M654 231 l-3 -7 M656.500 231 v-9 M659 231 l3 -7 M657.500 231 l1 -6" stroke-width="1.600"/><circle cx="650.500" cy="223" r="1.500" fill="#d8d8d8" stroke="none"/><circle cx="662.500" cy="223" r="1.500" fill="#d8d8d8" stroke="none"/><circle cx="656.500" cy="221" r="1.500" fill="#d8d8d8" stroke="none"/>
  <!-- brush presets -->
  <path d="M648 254.500 h18 M648 262.500 h18" stroke-width="1.800"/><path d="M652 252 v5 M661 260 v5" stroke-width="2.400"/><circle cx="662" cy="266" r="2.200" fill="#d8d8d8" stroke="none"/>
  <!-- A| -->
  <path d="M663.500 291 v16" stroke-width="1"/>
  <!-- info -->
  <circle cx="657" cy="355" r="8" fill="#d8d8d8" stroke="none"/><rect x="655.500" y="353" width="3" height="6.500" fill="#444" stroke="none"/><circle cx="657" cy="350.500" r="1.600" fill="#444" stroke="none"/>
  <!-- clone source -->
  <path d="M649 375.500 h7 l5 5 v10 h-7 l-5 -5z M656 375.500 v10 M661 380.500 h6 v10 h-6 M649 375.500 l12 15" stroke-width="1.200"/>
  <!-- last icon -->
  <circle cx="657" cy="424" r="5.500" stroke="#8c8c8c" stroke-width="1.800"/><circle cx="657" cy="416" r="2" fill="#8c8c8c" stroke="none"/><circle cx="650" cy="428" r="2" fill="#8c8c8c" stroke="none"/><circle cx="664" cy="428" r="2" fill="#8c8c8c" stroke="none"/>
 </svg>
 <span class="t" style="left:10px;top:212px;font-size:16px;line-height:20px;font-weight:bold;color:#dcdcdc">A</span>
 <span class="t" style="left:12px;top:238px;font-size:18px;line-height:22px;font-weight:bold;color:#dcdcdc;transform:scaleX(1.15);transform-origin:left">¶</span>
</div>
<div id="handle" class="abs"></div>
<div class="abs" style="left:678px;top:270px;width:5px;height:5px;background:repeating-linear-gradient(#e0e0e0 0,#e0e0e0 1px,transparent 1px,transparent 2px)"></div>
<!-- panel group header -->
<div class="abs" style="left:688px;top:67px;width:279px;height:10px;background:#2d2d2d"></div>
<svg style="left:957px;top:69px" width="9" height="6" viewBox="0 0 9 6"><path d="M0.500 0 V6 L4 3Z M5 0 V6 L8.500 3Z" fill="#d0d0d0"/></svg>
<div id="panel" class="abs">
 <div id="ptabs" class="abs"></div>
 <div id="ptab1" class="abs"></div>
 <span class="t" style="left:7px;top:1px;color:#f4f4f4">图层</span>
 <span class="t" style="left:47px;top:1px;color:#9d9d9d">通道</span>
 <span class="t" style="left:87px;top:1px;color:#9d9d9d">路径</span>
 <svg style="left:262px;top:4px" width="14" height="9" viewBox="0 0 14 9"><path d="M0 3 h5 l-2.500 3z" fill="#d8d8d8"/><path d="M6 1.500 h8 M6 4.500 h8 M6 7.500 h8" stroke="#d8d8d8" stroke-width="1.200"/></svg>
 <!-- filter row -->
 <div class="dd" style="left:4px;top:22px;width:83px;height:18px"></div>
 <svg style="left:11px;top:25px" width="12" height="12" viewBox="0 0 12 12" fill="none" stroke="#e6e6e6"><circle cx="7" cy="4.500" r="3.300" stroke-width="1.400"/><path d="M4.500 7 L1 10.500" stroke-width="1.800"/></svg>
 <span class="t" style="left:27px;top:23px;color:#f2f2f2">类型</span>
 <svg style="left:76px;top:26px" width="7" height="11" viewBox="0 0 7 11"><path d="M3.500 0.500 L6.500 4 H0.500Z M3.500 10.500 L6.500 7 H0.500Z" fill="#e8e8e8"/></svg>
 <svg style="left:0;top:0" width="279" height="110" viewBox="688 78 279 110" fill="none" stroke="#dcdcdc" stroke-width="1.200">
  <!-- image filter -->
  <rect x="789.500" y="103.500" width="12" height="10" stroke-width="1.300"/><path d="M791 112 l3 -4 l2 2 l1.500 -1.500 l2.500 3.500z" fill="#dcdcdc" stroke="none"/><circle cx="798" cy="106.500" r="1.100" fill="#dcdcdc" stroke="none"/>
  <!-- adjustment -->
  <circle cx="819" cy="108.500" r="5" fill="#dcdcdc" stroke="#dcdcdc"/><path d="M815.500 112 a5 5 0 0 0 7 -7z" fill="#666" stroke="none"/>
  <!-- shape -->
  <g shape-rendering="crispEdges"><rect x="863.500" y="104.500" width="8" height="8" stroke-width="1"/><g fill="#dcdcdc" stroke="none"><rect x="862" y="103" width="3" height="3"/><rect x="870" y="103" width="3" height="3"/><rect x="862" y="111" width="3" height="3"/><rect x="870" y="111" width="3" height="3"/></g><g fill="#535353" stroke="none"><rect x="863" y="104" width="1" height="1"/><rect x="871" y="104" width="1" height="1"/><rect x="863" y="112" width="1" height="1"/><rect x="871" y="112" width="1" height="1"/></g></g>
  <!-- smart -->
  <path d="M889.500 102.500 h5 l3 3 v9 h-8z" fill="#dcdcdc" stroke="none"/><path d="M894.500 102.500 v3 h3" stroke="#535353" stroke-width="1"/><rect x="885.500" y="108.500" width="6" height="6" fill="#9a9a9a" stroke="#535353" stroke-width="1"/>
  <!-- toggle -->
  <rect x="914.500" y="100.500" width="8" height="17" rx="1.500" fill="#2e2e2e" stroke="#2a2a2a"/><rect x="915.500" y="101.500" width="6" height="7" rx="1" fill="#8d8d8d" stroke="none"/>
  <!-- lock icons -->
  <g stroke="none"><rect x="732" y="160" width="11" height="11" fill="#7a7a7a"/><rect x="733" y="161" width="3" height="3" fill="#999"/><rect x="739" y="161" width="3" height="3" fill="#999"/><rect x="736" y="164" width="3" height="3" fill="#999"/><rect x="733" y="167" width="3" height="3" fill="#999"/><rect x="739" y="167" width="3" height="3" fill="#999"/></g>
  <path d="M767.500 159 L759 168" stroke="#a6a6a6" stroke-width="2"/><path d="M753 171.500 c3 0.500 5 -1 6 -3.500 l2 1.500 c-1 3 -4 4 -8 2z" fill="#a6a6a6" stroke="none"/>
  <path d="M781.500 160 v11 M776 165.500 h11" stroke-width="1.200"/><path d="M781.500 158 l-2.800 3 h5.600z M781.500 173 l-2.800 -3 h5.600z M774 165.500 l3 -2.800 v5.600z M789 165.500 l-3 -2.800 v5.600z" fill="#dcdcdc" stroke="none"/>
  <rect x="799.500" y="164.500" width="9" height="7" fill="#dcdcdc" stroke="none"/><path d="M801.500 164.500 v-2 a2.500 2.500 0 0 1 5 0 v2" stroke-width="1.500"/><rect x="803.300" y="166.500" width="1.400" height="3" fill="#444" stroke="none"/>
 </svg>
 <span class="t" style="left:150px;top:22px;font-family:'Liberation Serif',serif;font-weight:bold;font-size:15px;line-height:18px;color:#dcdcdc">T</span>
 <div class="psep" style="top:45px"></div>
 <!-- blend row -->
 <div class="dd" style="left:4px;top:50px;width:110px;height:18px"></div>
 <span class="t" style="left:13px;top:51px;color:#f2f2f2">正常</span>
 <svg style="left:104px;top:54px" width="7" height="11" viewBox="0 0 7 11"><path d="M3.500 0.500 L6.500 4 H0.500Z M3.500 10.500 L6.500 7 H0.500Z" fill="#e8e8e8"/></svg>
 <span class="t" style="left:123px;top:51px;color:#ececec">不透明度:</span>
 <div class="val" style="left:180px;top:49px">100%</div><div class="vbtn" style="left:217px;top:49px"></div>
 <div class="psep" style="top:73px"></div>
 <!-- lock row -->
 <span class="t" style="left:6px;top:79px;color:#ececec">锁定:</span>
 <span class="t" style="left:148px;top:79px;color:#ececec">填充:</span>
 <div class="val" style="left:180px;top:78px">100%</div><div class="vbtn" style="left:217px;top:78px"></div>
 <div class="abs" style="left:0;top:101px;width:279px;height:2px;background:#3c3c3c"></div>
 <!-- layers -->
 <div class="abs" style="left:0;top:103px;width:279px;height:252px;overflow:hidden">
  <div class="row sel" style="top:0"><div class="abs" style="left:31px;top:0;width:233px;height:49px;background:#667996"></div><div class="eyecol"></div>
   <div class="abs" style="left:33px;top:2px;width:58px;height:46px;border:1px solid #fff;"></div><div class="abs" style="left:45px;top:2px;width:34px;height:46px;background:#667996"></div><div class="abs" style="left:33px;top:14px;width:58px;height:22px;background:#667996"></div>
   <div class="thumb"><div class="abs" style="left:26px;top:20px;width:3px;height:2px;background:#111"></div><div class="badge"></div></div><span class="lname">矩形 1</span></div>
  <div class="row" style="top:50px"><div class="eyecol"></div><div class="thumb"><div class="badge"></div></div><span class="lname">眼睛</span></div>
  <div class="row" style="top:100px"><div class="eyecol"></div><div class="thumb"><div class="badge"></div></div><span class="lname">高亮</span></div>
  <div class="row" style="top:150px"><div class="eyecol"></div><div class="thumb"><div class="badge"></div>
    <svg style="left:19px;top:6px" width="18" height="24" viewBox="0 0 18 24"><path d="M2 22 V9 a7 7 0 0 1 14 0 V22 Z" fill="none" stroke="#111" stroke-width="1.600"/></svg></div><span class="lname">轮廓</span></div>
  <div class="row" style="top:200px"><div class="eyecol"></div><div class="thumb"><div class="badge"></div>
    <svg style="left:27px;top:6px" width="8" height="26" viewBox="0 0 8 26"><path d="M1.500 1 c3 2 4 5 4 9 v14" fill="none" stroke="#2f86dc" stroke-width="2.200"/></svg></div><span class="lname">阴影</span></div>
  <div class="row" style="top:250px"><div class="eyecol"></div></div>
  <!-- eyes + badges icons -->
  <svg style="left:0;top:0" width="279" height="253" viewBox="0 0 279 253">
   
   <g transform="translate(15,24.500)"><path d="M-6.500 0 C-4 -4.500 4 -4.500 6.500 0 C4 4.500 -4 4.500 -6.500 0Z" fill="#cbcbcb"/><circle r="2.300" fill="#444"/><circle cx="-0.800" cy="-0.800" r="0.800" fill="#cbcbcb"/></g><g transform="translate(15,74.500)"><path d="M-6.500 0 C-4 -4.500 4 -4.500 6.500 0 C4 4.500 -4 4.500 -6.500 0Z" fill="#cbcbcb"/><circle r="2.300" fill="#444"/><circle cx="-0.800" cy="-0.800" r="0.800" fill="#cbcbcb"/></g><g transform="translate(15,124.500)"><path d="M-6.500 0 C-4 -4.500 4 -4.500 6.500 0 C4 4.500 -4 4.500 -6.500 0Z" fill="#cbcbcb"/><circle r="2.300" fill="#444"/><circle cx="-0.800" cy="-0.800" r="0.800" fill="#cbcbcb"/></g><g transform="translate(15,174.500)"><path d="M-6.500 0 C-4 -4.500 4 -4.500 6.500 0 C4 4.500 -4 4.500 -6.500 0Z" fill="#cbcbcb"/><circle r="2.300" fill="#444"/><circle cx="-0.800" cy="-0.800" r="0.800" fill="#cbcbcb"/></g><g transform="translate(15,224.500)"><path d="M-6.500 0 C-4 -4.500 4 -4.500 6.500 0 C4 4.500 -4 4.500 -6.500 0Z" fill="#cbcbcb"/><circle r="2.300" fill="#444"/><circle cx="-0.800" cy="-0.800" r="0.800" fill="#cbcbcb"/></g>
   <g transform="translate(83.500,40.500)" shape-rendering="crispEdges"><rect x="-4" y="-4" width="8" height="8" fill="none" stroke="#d4d8de" stroke-width="1"/><g fill="#d4d8de"><rect x="-5.500" y="-5.500" width="3" height="3"/><rect x="2.500" y="-5.500" width="3" height="3"/><rect x="-5.500" y="2.500" width="3" height="3"/><rect x="2.500" y="2.500" width="3" height="3"/></g><g fill="#3a3a3a"><rect x="-4.500" y="-4.500" width="1" height="1"/><rect x="3.500" y="-4.500" width="1" height="1"/><rect x="-4.500" y="3.500" width="1" height="1"/><rect x="3.500" y="3.500" width="1" height="1"/></g></g><g transform="translate(83.500,90.500)" shape-rendering="crispEdges"><rect x="-4" y="-4" width="8" height="8" fill="none" stroke="#d4d8de" stroke-width="1"/><g fill="#d4d8de"><rect x="-5.500" y="-5.500" width="3" height="3"/><rect x="2.500" y="-5.500" width="3" height="3"/><rect x="-5.500" y="2.500" width="3" height="3"/><rect x="2.500" y="2.500" width="3" height="3"/></g><g fill="#3a3a3a"><rect x="-4.500" y="-4.500" width="1" height="1"/><rect x="3.500" y="-4.500" width="1" height="1"/><rect x="-4.500" y="3.500" width="1" height="1"/><rect x="3.500" y="3.500" width="1" height="1"/></g></g><g transform="translate(83.500,140.500)" shape-rendering="crispEdges"><rect x="-4" y="-4" width="8" height="8" fill="none" stroke="#d4d8de" stroke-width="1"/><g fill="#d4d8de"><rect x="-5.500" y="-5.500" width="3" height="3"/><rect x="2.500" y="-5.500" width="3" height="3"/><rect x="-5.500" y="2.500" width="3" height="3"/><rect x="2.500" y="2.500" width="3" height="3"/></g><g fill="#3a3a3a"><rect x="-4.500" y="-4.500" width="1" height="1"/><rect x="3.500" y="-4.500" width="1" height="1"/><rect x="-4.500" y="3.500" width="1" height="1"/><rect x="3.500" y="3.500" width="1" height="1"/></g></g><g transform="translate(83.500,190.500)" shape-rendering="crispEdges"><rect x="-4" y="-4" width="8" height="8" fill="none" stroke="#d4d8de" stroke-width="1"/><g fill="#d4d8de"><rect x="-5.500" y="-5.500" width="3" height="3"/><rect x="2.500" y="-5.500" width="3" height="3"/><rect x="-5.500" y="2.500" width="3" height="3"/><rect x="2.500" y="2.500" width="3" height="3"/></g><g fill="#3a3a3a"><rect x="-4.500" y="-4.500" width="1" height="1"/><rect x="3.500" y="-4.500" width="1" height="1"/><rect x="-4.500" y="3.500" width="1" height="1"/><rect x="3.500" y="3.500" width="1" height="1"/></g></g><g transform="translate(83.500,240.500)" shape-rendering="crispEdges"><rect x="-4" y="-4" width="8" height="8" fill="none" stroke="#d4d8de" stroke-width="1"/><g fill="#d4d8de"><rect x="-5.500" y="-5.500" width="3" height="3"/><rect x="2.500" y="-5.500" width="3" height="3"/><rect x="-5.500" y="2.500" width="3" height="3"/><rect x="2.500" y="2.500" width="3" height="3"/></g><g fill="#3a3a3a"><rect x="-4.500" y="-4.500" width="1" height="1"/><rect x="3.500" y="-4.500" width="1" height="1"/><rect x="-4.500" y="3.500" width="1" height="1"/><rect x="3.500" y="3.500" width="1" height="1"/></g></g>
  </svg>
  <!-- layer scrollbar -->
  <div class="abs" style="left:264px;top:0;width:15px;height:253px;background:linear-gradient(90deg,#353535 0,#353535 7px,#444 7px,#444 13px,#353535 13px)"></div>
  <div class="abs" style="left:269px;top:6px;border:3px solid transparent;border-bottom:3px solid #e8e8e8;border-top:none"></div>
  <div class="abs" style="left:266px;top:17px;width:12px;height:123px;background:linear-gradient(90deg,#8a8a8a,#747474);border-radius:3px;border:1px solid #5c5c5c"></div>
 </div>
</div>
<div class="abs" style="left:967px;top:66px;width:6px;height:367px;background:linear-gradient(90deg,#2c2c2c 0,#2c2c2c 3px,#454545 3px)"></div>

</body>
</html>
